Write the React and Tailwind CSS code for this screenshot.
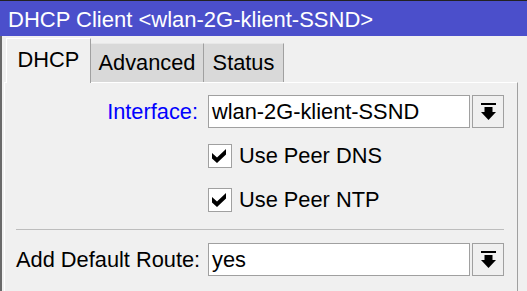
import React from 'react';

const DropIcon = () => (
  <svg width="15" height="17" viewBox="0 0 15 17">
    <rect x="0" y="0" width="15" height="2" fill="#000" />
    <rect x="3.5" y="4" width="8" height="5" fill="#000" />
    <polygon points="0,9 15,9 7.5,17" fill="#000" />
  </svg>
);

const Check = () => (
  <svg width="22" height="22" viewBox="0 0 22 22">
    <polygon points="3,8 8,12.5 17,4 17,9.5 8,18 3,13.5" fill="#000" />
  </svg>
);

const Combo = ({ value }) => (
  <div className="flex items-center ml-[10px]">
    <div className="w-[262px] h-[33px] bg-white border border-[#a0a0a0] pl-[3px] flex items-center leading-none">
      {value}
    </div>
    <div className="ml-[2px] w-[32px] h-[33px] border border-[#a0a0a0] bg-[#f0f0f0] flex items-center justify-center">
      <DropIcon />
    </div>
  </div>
);

const CheckRow = ({ label, className }) => (
  <div className={`flex items-center pl-[192px] ${className}`}>
    <div className="w-[24px] h-[24px] bg-white border border-[#a0a0a0] flex items-center justify-center">
      <Check />
    </div>
    <span className="ml-[7px] leading-none">{label}</span>
  </div>
);

export default function App() {
  return (
    <div className="w-[527px] h-[291px] overflow-hidden bg-[#f0f0f0] font-['Liberation_Sans',Arial,sans-serif] text-[21.8px] text-black border-t border-[#222]">
      <div className="h-[35px] bg-[#4b4fcb] text-white pl-[8px] pt-[3px] flex items-center leading-none text-[22px]">
        DHCP Client &lt;wlan-2G-klient-SSND&gt;
      </div>

      <div className="h-full border-l-2 border-[#6a6a6a] pt-[2px]">
        <div className="flex items-end pl-[4px]">
          <div className="relative z-10 -mb-px w-[85px] h-[45px] bg-[#f0f0f0] border-t border-l border-r border-t-white border-l-white border-r-[#a0a0a0] flex items-center justify-center leading-none pb-[2px]">
            DHCP
          </div>
          <div className="w-[113px] h-[39px] bg-[#d9d9d9] border-t border-r border-t-[#e8e8e8] border-r-[#a0a0a0] flex items-center justify-center leading-none">
            Advanced
          </div>
          <div className="w-[80px] h-[39px] bg-[#d9d9d9] border-t border-r border-t-[#e8e8e8] border-r-[#a0a0a0] flex items-center justify-center leading-none">
            Status
          </div>
        </div>

        <div className="ml-[2px] w-[514px] h-full border-t border-l border-r border-t-white border-l-white border-r-[#a0a0a0] pl-[11px] pt-[12px]">
          <div className="flex items-center">
            <div className="w-[182px] text-right text-[#0000ff] leading-none">Interface:</div>
            <Combo value="wlan-2G-klient-SSND" />
          </div>

          <CheckRow label="Use Peer DNS" className="mt-[16px]" />
          <CheckRow label="Use Peer NTP" className="mt-[20px]" />

          <div className="mt-[17px] w-[488px] h-px bg-[#bdbdbd]" />

          <div className="flex items-center mt-[13px]">
            <div className="w-[182px] leading-none whitespace-nowrap">Add Default Route:</div>
            <Combo value="yes" />
          </div>
        </div>
      </div>
    </div>
  );
}
